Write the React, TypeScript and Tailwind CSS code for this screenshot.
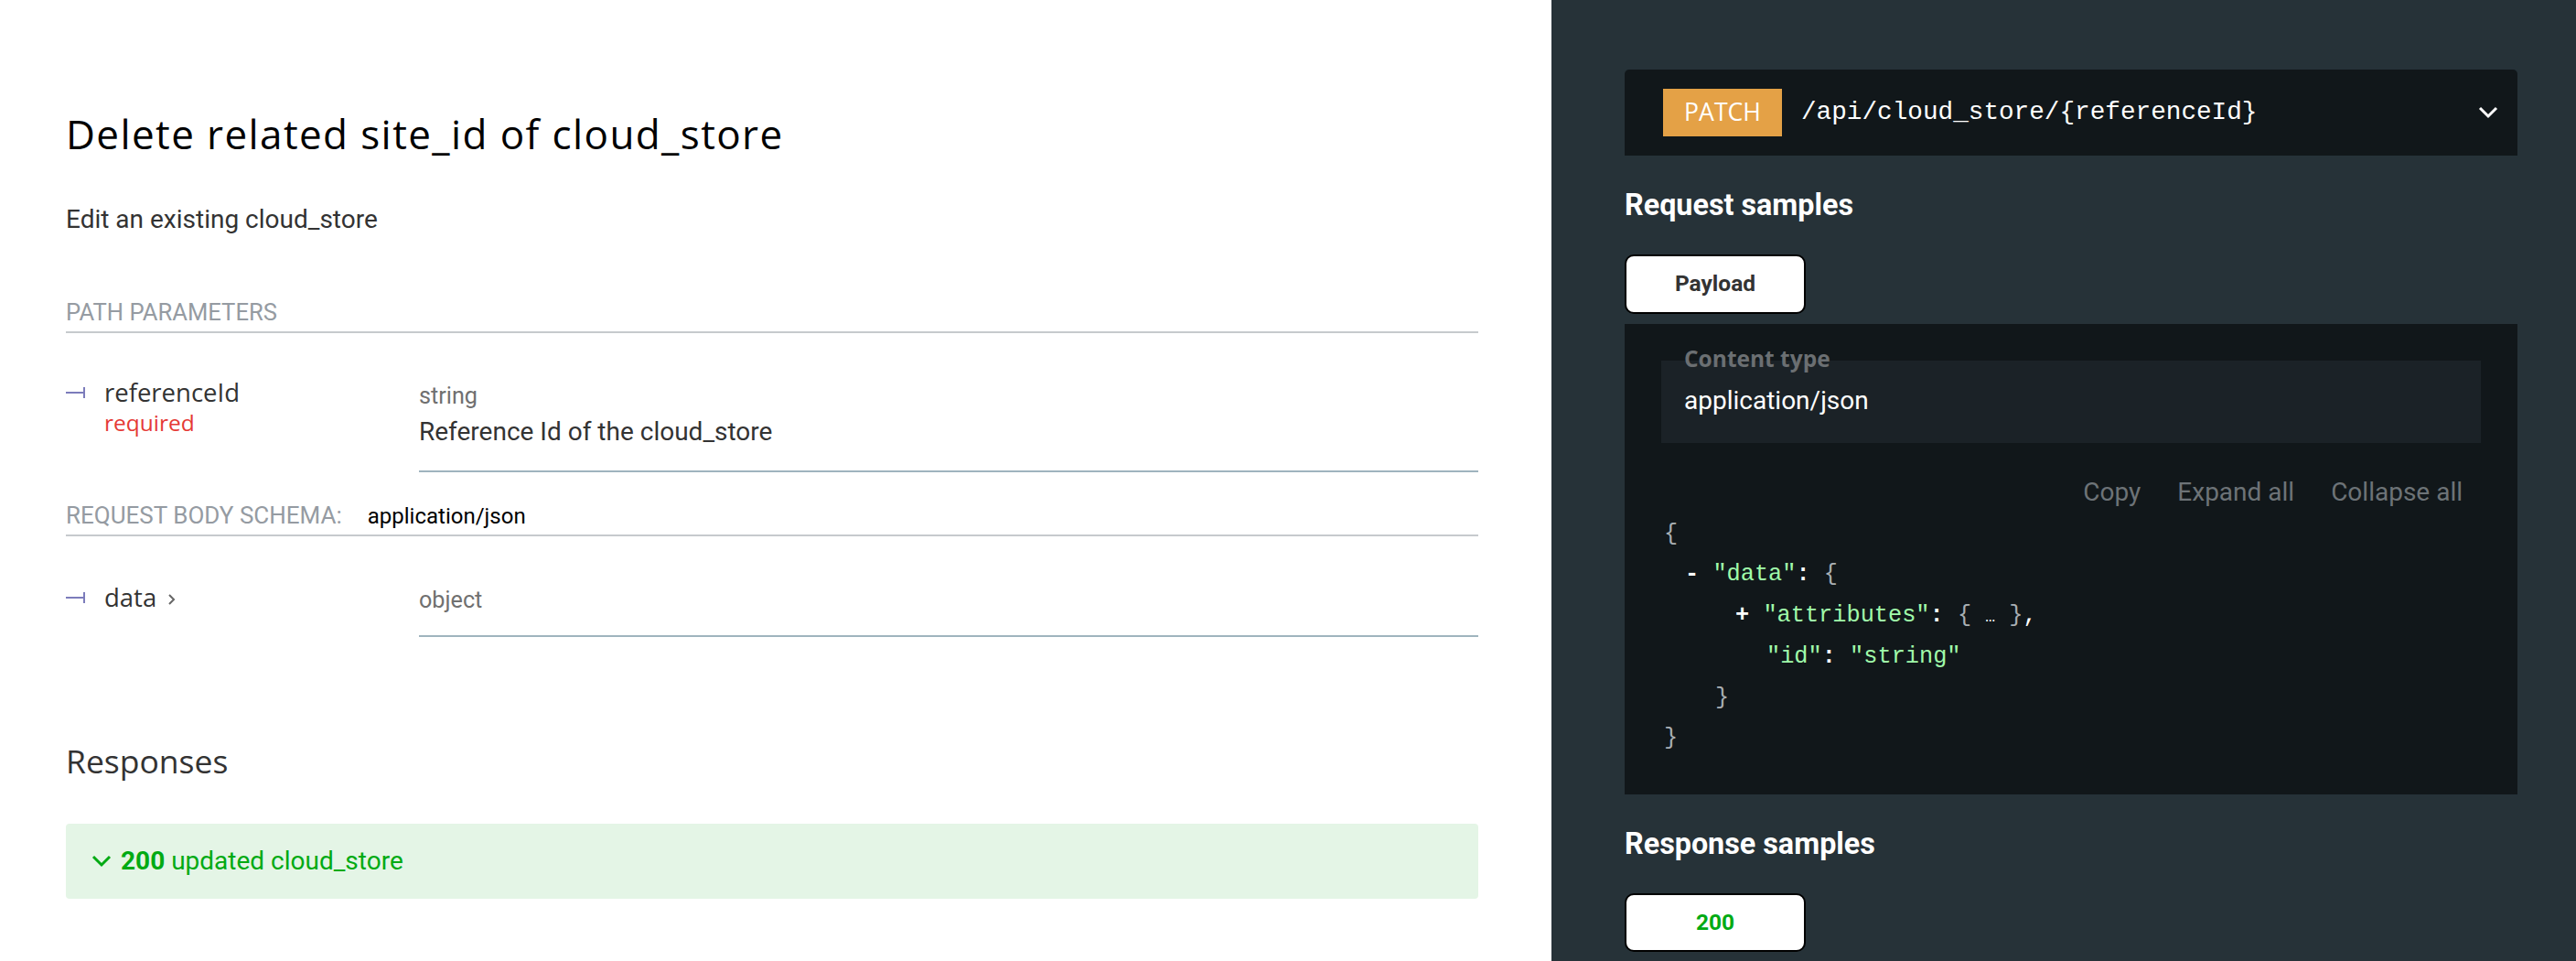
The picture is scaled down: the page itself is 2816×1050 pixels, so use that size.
import React from 'react';

const heading = "font-['Open_Sans',sans-serif]";
const body = "font-[Roboto,sans-serif]";
const mono = "font-['Liberation_Mono',monospace]";

const TreeMark: React.FC = () => (
  <svg width="22" height="14" viewBox="0 0 22 14" className="shrink-0">
    <line x1="0" y1="7" x2="20" y2="7" stroke="#7c7cbb" strokeWidth="2" />
    <line x1="20" y1="1" x2="20" y2="13" stroke="#7c7cbb" strokeWidth="2" />
  </svg>
);

interface ParamRowProps {
  name: string;
  type: string;
  required?: boolean;
  description?: string;
  expandable?: boolean;
  leftTop: string;
  rightTop: string;
}

const ParamRow: React.FC<ParamRowProps> = ({ name, type, required, description, expandable, leftTop, rightTop }) => (
  <div className="flex">
    <div className={`w-[386px] shrink-0 ${leftTop}`}>
      <div className="flex items-center h-[36px]">
        <TreeMark />
        <span className={`${heading} ml-[20px] text-[27.5px] leading-[36px] text-[#333]`}>{name}</span>
        {expandable && (
          <svg width="10" height="16" viewBox="0 0 10 16" className="ml-[12px] mt-[4px]">
            <polyline points="2,3 7,8 2,13" fill="none" stroke="#666" strokeWidth="2" />
          </svg>
        )}
      </div>
      {required && (
        <div className={`${heading} pl-[42px] text-[24.5px] leading-[30px] text-[#e53935]`}>required</div>
      )}
    </div>
    <div className={`flex-1 border-b-2 border-[#9fb4be] ${rightTop}`}>
      <div className={`${body} text-[25.2px] leading-[36px] text-[#707070]`}>{type}</div>
      {description && (
        <div className={`${body} text-[28px] leading-[42px] text-[#333]`}>{description}</div>
      )}
    </div>
  </div>
);

const CodeLine: React.FC<{ pad: string; children: React.ReactNode }> = ({ pad, children }) => (
  <div className={`${pad} whitespace-pre`}>{children}</div>
);

const Key: React.FC<{ children: React.ReactNode }> = ({ children }) => (
  <span className="text-[#a0fbaa]">{children}</span>
);

const Punct: React.FC<{ children: React.ReactNode }> = ({ children }) => (
  <span className="text-[#a9afb3]">{children}</span>
);

export default function App() {
  return (
    <div className="flex w-full h-[1050px] overflow-hidden">
      {/* middle panel */}
      <div className="w-[1696px] shrink-0 bg-white pl-[72px] pr-[80px] pt-[118px]">
        <h2 className={`${heading} text-[44px] leading-[56px] tracking-[1.4px] font-normal text-black`}>
          Delete related site_id of cloud_store
        </h2>
        <p className={`${body} mt-[45px] text-[28px] leading-[42px] text-[#333]`}>Edit an existing cloud_store</p>

        <h5 className={`${body} mt-[62px] pb-[3px] border-b-2 border-[#c6cacd] text-[25.6px] leading-[36px] text-[#959ba2] uppercase`}>
          Path parameters
        </h5>
        <ParamRow
          name="referenceId"
          type="string"
          required
          description="Reference Id of the cloud_store"
          leftTop="pt-[47px]"
          rightTop="pt-[51px] pb-[21px]"
        />

        <div className="mt-[29px] pb-[2px] border-b-2 border-[#c6cacd] flex items-baseline">
          <span className={`${body} text-[26px] leading-[36px] text-[#959ba2]`}>REQUEST BODY SCHEMA:</span>
          <span className={`${body} ml-[28px] text-[24px] leading-[36px] text-black`}>application/json</span>
        </div>
        <ParamRow
          name="data"
          type="object"
          expandable
          leftTop="pt-[49px]"
          rightTop="pt-[52px] pb-[20px]"
        />

        <h3 className={`${heading} mt-[113px] text-[35.5px] leading-[44px] font-normal text-[#333]`}>Responses</h3>
        <div className="mt-[47px] h-[82px] rounded-[4px] bg-[#e4f5e6] flex items-center pl-[28px]">
          <svg width="22" height="14" viewBox="0 0 22 14">
            <polyline points="2,2 11,11 20,2" fill="none" stroke="#00aa13" strokeWidth="3" />
          </svg>
          <span className={`${body} ml-[10px] text-[28px] leading-[42px] text-[#00aa13]`}>
            <strong className="font-bold">200</strong> updated cloud_store
          </span>
        </div>
      </div>

      {/* right panel */}
      <div className="flex-1 bg-[#263238] pl-[80px] pr-[64px] pt-[76px]">
        <div className="h-[94px] rounded-t-[5px] bg-[#11171a] flex items-center pl-[42px] pr-[21px]">
          <div className={`${heading} h-[52px] w-[130px] bg-[#e4a146] flex items-center justify-center text-white text-[26.6px]`}>
            PATCH
          </div>
          <span className={`${mono} ml-[21px] text-[27.7px] text-white`}>/api/cloud_store/{'{referenceId}'}</span>
          <svg width="22" height="14" viewBox="0 0 22 14" className="ml-auto">
            <polyline points="2,2 11,11 20,2" fill="none" stroke="white" strokeWidth="3" />
          </svg>
        </div>

        <h3 className={`${body} mt-[34px] text-[32.3px] leading-[40px] font-bold text-white`}>Request samples</h3>
        <button className={`${body} mt-[34px] h-[65px] w-[198px] rounded-[10px] border-2 border-black bg-white font-bold text-[#333] text-[24.5px]`}>
          Payload
        </button>

        <div className="mt-[11px] bg-[#11171a] px-[40px] pt-[40px] pb-[39px]">
          <div className="relative h-[90px] bg-[#1b2227] pt-[23px] pl-[25px]">
            <span className={`${heading} absolute left-[25px] top-[-17px] text-[24.5px] leading-[30px] font-bold text-[#6b6f72]`}>
              Content type
            </span>
            <div className={`${body} text-[28px] leading-[42px] text-white`}>application/json</div>
          </div>

          <div className={`${body} mt-[33px] flex justify-end text-[28px] leading-[42px] text-[#6d7377]`}>
            <span className="px-[20px]">Copy</span>
            <span className="px-[20px]">Expand all</span>
            <span className="px-[20px]">Collapse all</span>
          </div>

          <div className={`${mono} mt-[3px] text-[25.3px] leading-[44.4px] text-white`}>
            <CodeLine pad="pl-[3px]"><Punct>{'{'}</Punct></CodeLine>
            <CodeLine pad="pl-[26px]">
              <span className="font-bold">- </span><Key>"data"</Key><span className="font-bold">: </span><Punct>{'{'}</Punct>
            </CodeLine>
            <CodeLine pad="pl-[81px]">
              <span className="font-bold">+ </span><Key>"attributes"</Key><span className="font-bold">: </span>
              <Punct>{'{ '}</Punct><span className="text-[18px]">…</span><Punct>{' }'}</Punct>,
            </CodeLine>
            <CodeLine pad="pl-[115px]">
              <Key>"id"</Key><span className="font-bold">: </span><Key>"string"</Key>
            </CodeLine>
            <CodeLine pad="pl-[59px]"><Punct>{'}'}</Punct></CodeLine>
            <CodeLine pad="pl-[3px]"><Punct>{'}'}</Punct></CodeLine>
          </div>
        </div>

        <h3 className={`${body} mt-[34px] text-[32.3px] leading-[40px] font-bold text-white`}>Response samples</h3>
        <button className={`${body} mt-[34px] h-[64px] w-[198px] rounded-[10px] border-2 border-black bg-white font-bold text-[#00aa13] text-[24.5px]`}>
          200
        </button>
      </div>
    </div>
  );
}
